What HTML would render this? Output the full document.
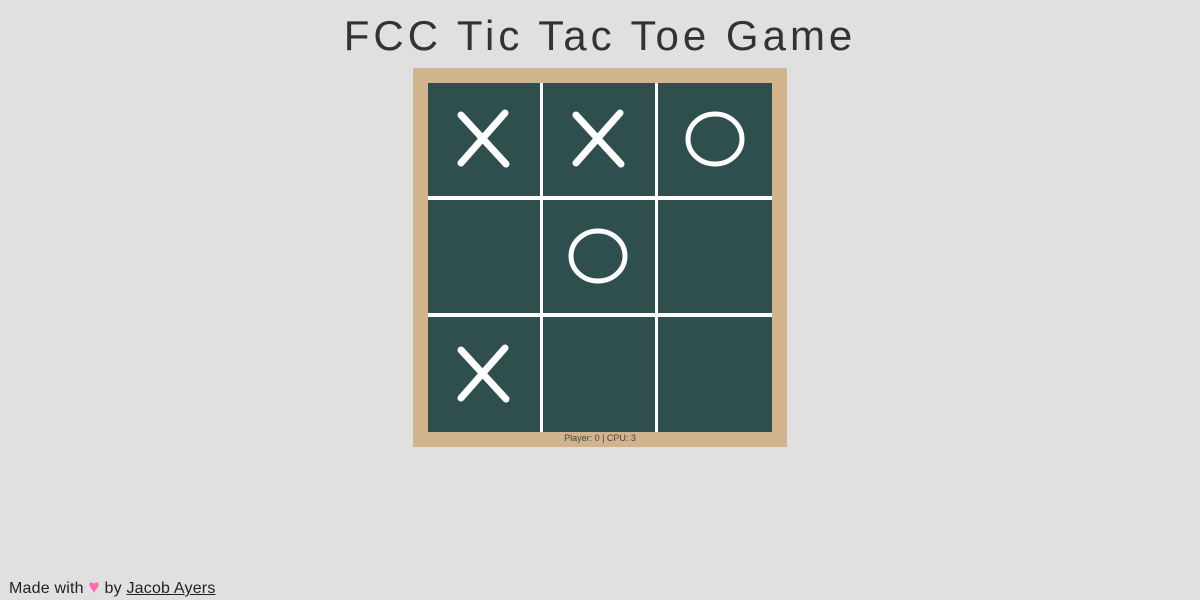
<!DOCTYPE html>
<html><head><style>
html,body{margin:0;width:1200px;height:600px;overflow:hidden}
body{background:#e0e0e0;position:relative;font-family:"Liberation Sans",sans-serif;color:#222}
h1{position:absolute;top:12px;left:0;width:1200px;margin:0;text-align:center;font-weight:normal;font-size:42px;letter-spacing:4px;color:#333}
.frame{position:absolute;left:413px;top:68px;width:374px;height:379px;background:#d2b48c}
.board{position:absolute;left:428px;top:83px;width:344px;height:349px;background:#fff}
.c{position:absolute;background:#2f4f4f}
.score{position:absolute;left:413px;top:433px;width:374px;text-align:center;font-size:9px;color:#444}
.foot{position:absolute;left:9px;top:578px;font-size:16px;line-height:20px;color:#222;letter-spacing:0.2px}
.foot u{text-decoration:underline}
</style></head><body>
<h1>FCC Tic Tac Toe Game</h1>
<div class="frame"></div>
<div class="board"></div>
<div class="c" style="left:428px;top:83px;width:112px;height:113px"></div>
<div class="c" style="left:543px;top:83px;width:112px;height:113px"></div>
<div class="c" style="left:658px;top:83px;width:114px;height:113px"></div>
<div class="c" style="left:428px;top:200px;width:112px;height:113px"></div>
<div class="c" style="left:543px;top:200px;width:112px;height:113px"></div>
<div class="c" style="left:658px;top:200px;width:114px;height:113px"></div>
<div class="c" style="left:428px;top:317px;width:112px;height:115px"></div>
<div class="c" style="left:543px;top:317px;width:112px;height:115px"></div>
<div class="c" style="left:658px;top:317px;width:114px;height:115px"></div>
<svg width="1200" height="600" style="position:absolute;left:0;top:0" fill="none" stroke="#fff" stroke-linecap="round">
<g stroke-width="7">
<path d="M461 115 L506 164 M505 113 L461 163"/>
<path d="M576 115 L621 164 M620 113 L576 163"/>
<path d="M461 350 L506 399 M505 348 L461 398"/>
</g>
<g stroke-width="5">
<ellipse cx="715" cy="139" rx="27" ry="25"/>
<ellipse cx="598" cy="256" rx="27" ry="25"/>
</g>
</svg>
<div class="score">Player: 0 | CPU: 3</div>
<div class="foot">Made with <span style="color:#ff69b4;font-size:19px">♥</span> by <u>Jacob Ayers</u></div>
</body></html>
